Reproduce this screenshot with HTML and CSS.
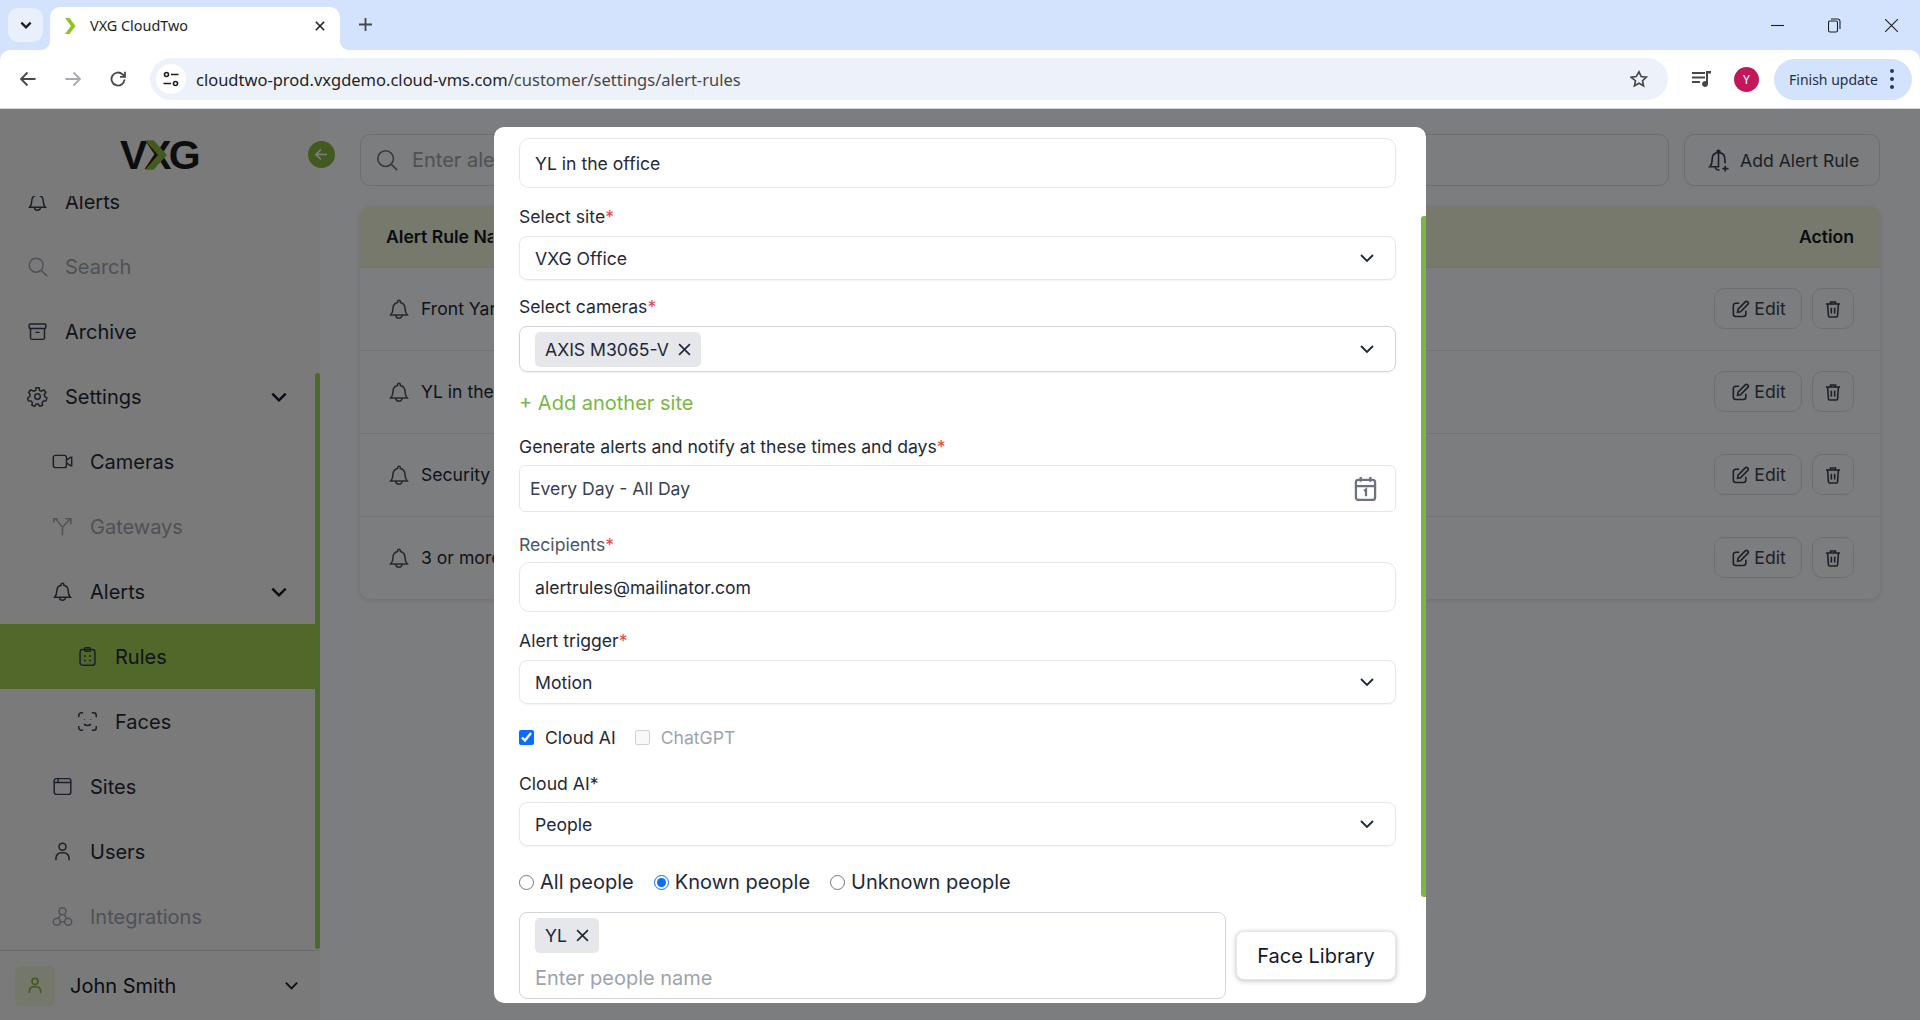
FILE: index.html
```html
<!DOCTYPE html>
<html lang="en">
<head>
    <meta charset="UTF-8">
    <meta name="viewport" content="width=device-width, initial-scale=1.0">
    <title>VXG CloudTwo</title>
    <link rel="stylesheet" href="styles.css">
</head>
<body>
    <!-- Shared icons -->
    <svg class="icon-defs" aria-hidden="true">
        <symbol id="i-bell" viewBox="0 0 24 24"><path d="M12 2.500a1.500 1.500 0 0 1 1.500 1.500v.8A6.500 6.500 0 0 1 18.500 11c0 4 1 5.800 2.500 7.500H3C4.500 16.800 5.500 15 5.500 11a6.500 6.500 0 0 1 5-6.200V4A1.500 1.500 0 0 1 12 2.500z"/><path d="M8.500 18.500a3.500 3.500 0 0 0 7 0"/></symbol>
        <symbol id="i-chev" viewBox="0 0 24 24"><path d="M4 8l8 8 8-8"/></symbol>
        <symbol id="i-edit" viewBox="0 0 24 24"><path d="M11 5H7a3 3 0 0 0-3 3v10a3 3 0 0 0 3 3h9a3 3 0 0 0 3-3v-4"/><path d="M9 16l.7-3.700 8.600-8.800a2.100 2.100 0 0 1 3 3l-8.700 8.800z"/></symbol>
        <symbol id="i-trash" viewBox="0 0 24 24"><path d="M3.500 6h17"/><path d="M9 6V3.500h6V6"/><path d="M5.500 6l1 14a1.500 1.500 0 0 0 1.500 1.500h8a1.500 1.500 0 0 0 1.500-1.500l1-14"/><path d="M10 10.500v7"/><path d="M14 10.500v7"/></symbol>
        <symbol id="i-user" viewBox="0 0 24 24"><circle cx="12" cy="6.500" r="4"/><path d="M4.500 22v-2.500a6 6 0 0 1 6-6h3a6 6 0 0 1 6 6V22"/></symbol>
    </svg>

    <!-- Browser chrome -->
    <div class="tabstrip">
        <button class="tab-list"><svg class="stroke-dark" width="14" height="14"><use href="#i-chev"/></svg></button>
        <div class="tab">
            <svg class="favicon" width="11" height="16" viewBox="0 0 11 16"><path d="M0 0h4.500l6 8-6 8H0l6-8z"/></svg>
            <span class="tab-title">VXG CloudTwo</span>
            <svg class="tab-close" width="10" height="10" viewBox="0 0 10 10"><path d="M.8.8l8.400 8.400M9.200.8L.8 9.200"/></svg>
        </div>
        <svg class="tab-new" width="13" height="13" viewBox="0 0 13 13"><path d="M6.500 0v13M0 6.500h13"/></svg>
        <div class="window-controls">
            <svg width="13" height="13" viewBox="0 0 13 13"><path d="M0 6.500h13"/></svg>
            <svg width="13" height="15" viewBox="0 0 13 15"><rect x=".5" y="3" width="9" height="11" rx="1.500"/><path d="M3 1h6.500A2.500 2.500 0 0 1 12 3.500V11"/></svg>
            <svg width="13" height="13" viewBox="0 0 13 13"><path d="M0 0l13 13M13 0L0 13"/></svg>
        </div>
    </div>
    <div class="toolbar">
        <svg class="tool" width="16" height="16" viewBox="0 0 16 16"><path d="M15.500 8H1M7.500 1.500L1 8l6.500 6.500"/></svg>
        <svg class="tool tool-off" width="16" height="16" viewBox="0 0 16 16"><path d="M.5 8H15M8.500 1.500L15 8l-6.500 6.500"/></svg>
        <svg class="tool" width="16" height="16" viewBox="0 0 16 16"><path d="M14.500 8.500A6.500 6.500 0 1 1 12.500 3.300L14.800 5.300"/><path d="M15 .8v5h-5"/></svg>
        <div class="omnibox">
            <span class="site-info">
                <svg width="16" height="16" viewBox="0 0 16 16"><circle cx="3.500" cy="3.500" r="2"/><path d="M8 3.500h7.500M.5 12.500H8"/><circle cx="12.500" cy="12.500" r="2"/></svg>
            </span>
            <span class="url">cloudtwo-prod.vxgdemo.cloud-vms.com<span class="url-path">/customer/settings/alert-rules</span></span>
            <svg class="star" width="18" height="18" viewBox="0 0 24 24"><path d="M12 2.500l2.900 6.300 6.900.8-5.100 4.700 1.400 6.800-6.100-3.400-6.100 3.400 1.400-6.800L1.300 9.600l6.900-.8z"/></svg>
        </div>
        <svg class="media" width="20" height="18" viewBox="0 0 20 18"><path d="M0 2h13v2H0zM0 6.500h13v2H0zM0 11h8v2H0z"/><path d="M14 1h5v2.500h-3V14a3 3 0 1 1-2-2.800z"/></svg>
        <span class="avatar">Y</span>
        <div class="finish-update">
            <span>Finish update</span>
            <span class="dots"><i></i><i></i><i></i></span>
        </div>
    </div>

    <!-- App page behind the dialog -->
    <div class="app">
        <aside class="sidebar">
            <div class="logo-row">
                <div class="logo"><span>V</span><span class="logo-x">X<svg width="22" height="30" viewBox="0 0 23 31"><path d="M0 0h9l14 15.500L9 31H0l13.500-15.500z"/></svg></span><span>G</span></div>
                <span class="collapse"><svg width="13" height="13" viewBox="0 0 13 13"><path d="M12 6.500H1.500M6 1.500l-5 5 5 5"/></svg></span>
            </div>
            <nav class="nav">
                <a class="nav-item nav-first"><svg class="nav-icon"><use href="#i-bell"/></svg>Alerts</a>
                <a class="nav-item off"><svg class="nav-icon" viewBox="0 0 24 24"><circle cx="10.500" cy="10.500" r="8"/><path d="M16.500 16.500L23 23"/></svg>Search</a>
                <a class="nav-item"><svg class="nav-icon" viewBox="0 0 24 24"><rect x="2.500" y="3.500" width="19" height="5" rx="1"/><path d="M4 8.500V19a2 2 0 0 0 2 2h12a2 2 0 0 0 2-2V8.500M9.500 13h5"/></svg>Archive</a>
                <a class="nav-item"><svg class="nav-icon" viewBox="0 0 24 24"><circle cx="12" cy="12" r="3.200"/><path d="M10.300 2h3.400l.6 3 2.200 1 2.700-1.500 2.300 2.700-1.700 2.500.4 2.400 2.500 1.500-.9 3.300-3 .2-1.500 1.900.5 3-3.200 1.200-1.700-2.500h-2.400l-1.700 2.500-3.200-1.200.5-3-1.500-1.900-3-.2-.9-3.300 2.500-1.500.4-2.400-1.700-2.500 2.300-2.700L7.700 6l2.200-1z"/></svg>Settings<svg class="chev"><use href="#i-chev"/></svg></a>
                <a class="nav-item sub"><svg class="nav-icon" viewBox="0 0 24 24"><rect x="1.500" y="5" width="15" height="14" rx="2.500"/><path d="M16.500 10.500l5-3.500h1v10h-1l-5-3.500"/></svg>Cameras</a>
                <a class="nav-item sub off"><svg class="nav-icon" viewBox="0 0 24 24"><path d="M12 22v-9l9-10M15 3h6.500v6.500M12 13L4 3M2 7.500V3h4.500"/></svg>Gateways</a>
                <a class="nav-item sub"><svg class="nav-icon"><use href="#i-bell"/></svg>Alerts<svg class="chev"><use href="#i-chev"/></svg></a>
                <a class="nav-item subsub active"><svg class="nav-icon" viewBox="0 0 24 24"><rect x="3.500" y="4" width="17" height="18" rx="3"/><rect x="8.500" y="2" width="7" height="4" rx="1.500"/><path d="M8 11.500h2M14 11.500h2M8 16.500h2M14 16.500h2"/></svg>Rules</a>
                <a class="nav-item subsub"><svg class="nav-icon" viewBox="0 0 24 24"><path d="M2 7V5a3 3 0 0 1 3-3h2M17 2h2a3 3 0 0 1 3 3v2M22 17v2a3 3 0 0 1-3 3h-2M7 22H5a3 3 0 0 1-3-3v-2M8 15c2 2 6 2 8 0M8.500 9.500v.5M15.500 9.500v.5"/></svg>Faces</a>
                <a class="nav-item sub"><svg class="nav-icon" viewBox="0 0 24 24"><rect x="2.500" y="3" width="19" height="18" rx="2.500"/><path d="M2.500 7.500h19M7 3v4.500"/></svg>Sites</a>
                <a class="nav-item sub"><svg class="nav-icon"><use href="#i-user"/></svg>Users</a>
                <a class="nav-item sub off"><svg class="nav-icon" viewBox="0 0 24 24"><circle cx="12" cy="6" r="4"/><circle cx="5.500" cy="18" r="4"/><circle cx="18.500" cy="18" r="4"/><path d="M10 9.500L7.500 14M14 9.500l2.500 4.500M9.500 18h5"/></svg>Integrations</a>
            </nav>
            <div class="side-scroll"></div>
            <div class="account">
                <span class="account-pic"><svg width="18" height="21"><use href="#i-user"/></svg></span>
                <span class="account-name">John Smith</span>
                <svg class="chev account-chev"><use href="#i-chev"/></svg>
            </div>
        </aside>

        <main class="content">
            <div class="top-row">
                <div class="search-box">
                    <svg width="22" height="22" viewBox="0 0 24 24"><circle cx="10.500" cy="10.500" r="8.500"/><path d="M16.800 16.800L23 23"/></svg>
                    <span class="cut cut-search">Enter ale</span>
                </div>
                <button class="add-rule">
                    <svg width="23" height="25" viewBox="0 0 24 24"><path d="M12 1.500a1.500 1.500 0 0 1 1.500 1.500v.8A6.500 6.500 0 0 1 18.500 10c0 2.500.3 4 .8 5M12 18.500H3C4.500 16.800 5.500 15 5.500 10a6.500 6.500 0 0 1 5-6.200V3A1.500 1.500 0 0 1 12 1.500zM8.500 18.500a3.500 3.500 0 0 0 4.500 3.300M19 17.500v6M16 20.500h6.500"/></svg>
                    Add Alert Rule
                </button>
            </div>
            <div class="rules-card">
                <div class="rules-head"><span class="cut cut-head">Alert Rule Na</span><span>Action</span></div>
                <div class="rule-row">
                    <svg class="rule-bell"><use href="#i-bell"/></svg><span class="rule-name"><span class="cut cut-row">Front Yar</span></span>
                    <button class="btn-edit"><svg><use href="#i-edit"/></svg>Edit</button>
                    <button class="btn-del"><svg><use href="#i-trash"/></svg></button>
                </div>
                <div class="rule-row">
                    <svg class="rule-bell"><use href="#i-bell"/></svg><span class="rule-name"><span class="cut cut-row">YL in the</span></span>
                    <button class="btn-edit"><svg><use href="#i-edit"/></svg>Edit</button>
                    <button class="btn-del"><svg><use href="#i-trash"/></svg></button>
                </div>
                <div class="rule-row">
                    <svg class="rule-bell"><use href="#i-bell"/></svg><span class="rule-name"><span class="cut cut-row">Security</span></span>
                    <button class="btn-edit"><svg><use href="#i-edit"/></svg>Edit</button>
                    <button class="btn-del"><svg><use href="#i-trash"/></svg></button>
                </div>
                <div class="rule-row">
                    <svg class="rule-bell"><use href="#i-bell"/></svg><span class="rule-name"><span class="cut cut-row">3 or more</span></span>
                    <button class="btn-edit"><svg><use href="#i-edit"/></svg>Edit</button>
                    <button class="btn-del"><svg><use href="#i-trash"/></svg></button>
                </div>
            </div>
        </main>

        <!-- Dialog -->
        <div class="overlay">
            <div class="modal">
                <div class="input input-first">YL in the office</div>

                <label class="label lb-site">Select site<b>*</b></label>
                <div class="input select">VXG Office<svg class="chev-sm"><use href="#i-chev"/></svg></div>

                <label class="label lb-cameras">Select cameras<b>*</b></label>
                <div class="input select multi">
                    <span class="chip">AXIS M3065-V<svg viewBox="0 0 12 12"><path d="M1 1l10 10M11 1L1 11"/></svg></span>
                    <svg class="chev-sm"><use href="#i-chev"/></svg>
                </div>

                <div class="add-site">+ Add another site</div>

                <label class="label lb-times">Generate alerts and notify at these times and days<b>*</b></label>
                <div class="input schedule">Every Day - All Day
                    <svg class="calendar" viewBox="0 0 24 26"><rect x="2" y="4" width="20" height="21" rx="2.500"/><path d="M2 10.500h20M7 1v5M17 1v5M10.500 15.500l2-1.500v7"/></svg>
                </div>

                <label class="label lb-recipients">Recipients<b>*</b></label>
                <div class="input input-mail">alertrules@mailinator.com</div>

                <label class="label lb-trigger">Alert trigger<b>*</b></label>
                <div class="input select">Motion<svg class="chev-sm"><use href="#i-chev"/></svg></div>

                <div class="checks">
                    <label class="check"><input type="checkbox" checked>Cloud AI</label>
                    <label class="check check-off"><input type="checkbox" disabled>ChatGPT</label>
                </div>

                <label class="label lb-cloud">Cloud AI<span class="plain-star">*</span></label>
                <div class="input select">People<svg class="chev-sm"><use href="#i-chev"/></svg></div>

                <div class="radios">
                    <label class="radio"><input type="radio" name="people">All people</label>
                    <label class="radio"><input type="radio" name="people" checked>Known people</label>
                    <label class="radio"><input type="radio" name="people">Unknown people</label>
                </div>

                <div class="people-row">
                    <div class="people-box">
                        <span class="chip">YL<svg viewBox="0 0 12 12"><path d="M1 1l10 10M11 1L1 11"/></svg></span>
                        <div class="placeholder">Enter people name</div>
                    </div>
                    <button class="face-library">Face Library</button>
                </div>

                <div class="modal-scroll"></div>
            </div>
        </div>
    </div>
</body>
</html>
```

FILE: styles.css
```css
* {
    box-sizing: border-box;
}

html, body {
    height: 100%;
}

body {
    margin: 0;
    display: flex;
    flex-direction: column;
    overflow: hidden;
    font-family: Inter, "Liberation Sans", sans-serif;
    color: #111827;
    background-color: #d3e3fd;
}

button {
    font-family: inherit;
}

.icon-defs {
    display: none;
}

/* Browser chrome */
.tabstrip {
    height: 50px;
    flex-shrink: 0;
    display: flex;
    align-items: flex-end;
    font-family: "Noto Sans", sans-serif;
}

.tab-list {
    width: 35px;
    height: 34px;
    margin: 0 7px 8px 8px;
    border: none;
    border-radius: 10px;
    background-color: #e9effb;
    display: flex;
    align-items: center;
    justify-content: center;
}

.stroke-dark {
    fill: none;
    stroke: #1f1f1f;
    stroke-width: 4;
}

.tab {
    position: relative;
    width: 290px;
    height: 43px;
    display: flex;
    align-items: center;
    padding: 0 15px 6px 15px;
    background-color: #fff;
    border-radius: 10px 10px 0 0;
}

/* Curved feet of the active tab */
.tab::before, .tab::after {
    content: "";
    position: absolute;
    bottom: 0;
    width: 10px;
    height: 10px;
}

.tab::before {
    left: -10px;
    background: radial-gradient(circle at 0 0, transparent 10px, #fff 10.500px);
}

.tab::after {
    right: -10px;
    background: radial-gradient(circle at 100% 0, transparent 10px, #fff 10.500px);
}

.favicon {
    fill: #8fc31f;
    flex-shrink: 0;
}

.tab-title {
    margin-left: 14px;
    font-size: 14.400px;
    color: #1f1f1f;
    flex: 1;
}

.tab-close {
    stroke: #1f1f1f;
    stroke-width: 1.600;
}

.tab-new {
    margin: 0 0 19px 19px;
    stroke: #474747;
    stroke-width: 1.800;
}

.window-controls {
    margin-left: auto;
    height: 50px;
    width: 149px;
    padding-right: 22px;
    display: flex;
    justify-content: space-between;
    align-items: center;
}

.window-controls svg {
    fill: none;
    stroke: #1f1f1f;
    stroke-width: 1.100;
}

.toolbar {
    height: 59px;
    flex-shrink: 0;
    display: flex;
    align-items: center;
    padding-left: 20px;
    background-color: #fff;
    border-radius: 10px 10px 0 0;
    border-bottom: 1px solid #d3d5d8;
}

.tool {
    fill: none;
    stroke: #474747;
    stroke-width: 1.800;
    margin-right: 29px;
    flex-shrink: 0;
}

.tool-off {
    stroke: #a8abb0;
}

.omnibox {
    width: 1518px;
    height: 42px;
    margin-left: -5px;
    display: flex;
    align-items: center;
    padding: 0 20px 0 6px;
    border-radius: 21px;
    background-color: #edf2fa;
}

.site-info {
    width: 30px;
    height: 30px;
    border-radius: 50%;
    background-color: #fff;
    display: flex;
    align-items: center;
    justify-content: center;
}

.site-info svg {
    fill: none;
    stroke: #1f1f1f;
    stroke-width: 1.600;
}

.url {
    margin-left: 10px;
    font-family: "Noto Sans", sans-serif;
    font-size: 16.500px;
    color: #1f1f1f;
    flex: 1;
}

.url-path {
    color: #474747;
}

.star {
    fill: none;
    stroke: #474747;
    stroke-width: 2.200;
}

.media {
    margin-left: 24px;
    fill: #474747;
    flex-shrink: 0;
}

.avatar {
    width: 25px;
    height: 25px;
    margin-left: 22px;
    border-radius: 50%;
    background-color: #c2185b;
    color: #fff;
    font-family: "Noto Sans", sans-serif;
    font-size: 12px;
    display: flex;
    align-items: center;
    justify-content: center;
    flex-shrink: 0;
}

.finish-update {
    width: 138px;
    height: 41px;
    margin-left: 15px;
    padding-left: 15px;
    border-radius: 21px;
    background-color: #d3e3fd;
    display: flex;
    align-items: center;
    font-family: "Noto Sans", sans-serif;
    font-size: 14px;
    color: #1f2f4a;
    flex-shrink: 0;
}

.dots {
    margin-left: 12px;
    display: flex;
    flex-direction: column;
    gap: 4px;
}

.dots i {
    width: 4px;
    height: 4px;
    border-radius: 50%;
    background-color: #1f3a68;
}

/* App */
.app {
    position: relative;
    flex: 1;
    display: flex;
    min-height: 0;
    background-color: #f9fafd;
}

.sidebar {
    position: relative;
    width: 320px;
    flex-shrink: 0;
    display: flex;
    flex-direction: column;
    background-color: #f4f4f4;
}

.logo-row {
    position: relative;
    height: 87px;
    flex-shrink: 0;
    padding: 29px 0 0 120px;
}

.logo {
    display: flex;
    font-family: "Liberation Sans", sans-serif;
    font-weight: 700;
    font-size: 41px;
    line-height: 34px;
    color: #1a1a1a;
}

.logo-x {
    position: relative;
    margin-left: -3px;
    margin-right: -3px;
}

.logo-x svg {
    position: absolute;
    left: 1px;
    top: 2px;
    fill: #84b440;
}

.collapse {
    position: absolute;
    left: 308px;
    top: 32px;
    width: 27px;
    height: 27px;
    border-radius: 50%;
    background-color: #84b440;
    display: flex;
    align-items: center;
    justify-content: center;
}

.collapse svg {
    fill: none;
    stroke: #fff;
    stroke-width: 1.600;
}

.nav {
    flex: 1;
    overflow: hidden;
    min-height: 0;
    margin-right: 5px;
}

.nav-item {
    height: 65px;
    display: flex;
    align-items: center;
    padding-left: 27px;
    font-size: 20px;
    color: #1f2937;
}

.nav-first {
    margin-top: -27px;
}

.nav-icon {
    width: 21px;
    height: 21px;
    margin-right: 17px;
    fill: none;
    stroke: #374151;
    stroke-width: 1.700;
    flex-shrink: 0;
}

.sub {
    padding-left: 52px;
}

.subsub {
    padding-left: 77px;
}

.off {
    color: #9ca3af;
}

.off .nav-icon {
    stroke: #9ca3af;
}

.active {
    background-color: #a4d054;
}

.chev {
    width: 20px;
    height: 20px;
    margin-left: auto;
    margin-right: 26px;
    fill: none;
    stroke: #111827;
    stroke-width: 3;
}

.side-scroll {
    position: absolute;
    right: 0;
    top: 264px;
    width: 5px;
    height: 576px;
    border-radius: 3px;
    background-color: #96d556;
}

.account {
    height: 70px;
    flex-shrink: 0;
    display: flex;
    align-items: center;
    padding-left: 15px;
    border-top: 1px solid #d8d8d8;
}

.account-pic {
    width: 40px;
    height: 40px;
    border-radius: 6px;
    background-color: #e6f0d6;
    display: flex;
    align-items: center;
    justify-content: center;
}

.account-pic svg {
    fill: none;
    stroke: #84b440;
    stroke-width: 2.200;
}

.account-name {
    margin-left: 15px;
    font-size: 20px;
}

.account-chev {
    width: 17px;
    height: 17px;
    margin-right: 20px;
    stroke-width: 2.600;
}

.content {
    flex: 1;
    padding: 25px 40px 0 40px;
}

.top-row {
    display: flex;
    gap: 15px;
}

/* Text that the dialog covers is clipped at the dialog's edge */
.cut {
    display: block;
    overflow: hidden;
    white-space: nowrap;
}

.cut-search {
    width: 83px;
}

.cut-head {
    width: 107px;
}

.cut-row {
    width: 74px;
}

.search-box {
    flex: 1;
    height: 52px;
    padding-left: 15px;
    border: 1px solid #dcdee2;
    border-radius: 10px;
    display: flex;
    align-items: center;
    gap: 14px;
    font-size: 20px;
    color: #9ca3af;
}

.search-box svg {
    fill: none;
    stroke: #6b7280;
    stroke-width: 1.700;
}

.add-rule {
    width: 196px;
    height: 52px;
    padding: 0 0 0 22px;
    border: 1px solid #dcdee2;
    border-radius: 10px;
    background: none;
    display: flex;
    align-items: center;
    gap: 10px;
    font-size: 17.600px;
    color: #374151;
}

.add-rule svg {
    fill: none;
    stroke: #374151;
    stroke-width: 1.700;
}

.rules-card {
    margin-top: 21px;
    border-radius: 10px;
    box-shadow: 0 1px 5px rgba(0, 0, 0, 0.12);
    overflow: hidden;
}

.rules-head {
    height: 60px;
    padding: 0 26px 1px 26px;
    display: flex;
    align-items: center;
    justify-content: space-between;
    background-color: #ecf3d6;
    font-size: 17.600px;
    font-weight: 600;
}

.rule-row {
    height: 83px;
    padding: 0 26px 1px 28px;
    display: flex;
    align-items: center;
    border-top: 1px solid #e5e7eb;
    font-size: 17.600px;
    color: #1f2937;
}

.rule-row:first-of-type {
    border-top: none;
}

.rule-bell {
    width: 22px;
    height: 24px;
    margin-right: 11px;
    fill: none;
    stroke: #4b5563;
    stroke-width: 1.700;
}

.rule-name {
    flex: 1;
}

.btn-edit, .btn-del {
    height: 41px;
    border: 1px solid #dcdee2;
    border-radius: 10px;
    background: none;
    display: flex;
    align-items: center;
    justify-content: center;
    font-size: 17.600px;
    color: #374151;
}

.btn-edit {
    width: 88px;
    gap: 4px;
}

.btn-del {
    width: 42px;
    margin-left: 10px;
}

.btn-edit svg, .btn-del svg {
    width: 20px;
    height: 20px;
    fill: none;
    stroke: #374151;
    stroke-width: 1.900;
}

/* Dialog */
.overlay {
    position: absolute;
    inset: 0;
    background-color: rgba(0, 0, 0, 0.5);
    padding: 18px 0 0 494px;
}

.modal {
    position: relative;
    width: 932px;
    height: 876px;
    padding: 11px 30px 0 25px;
    overflow: hidden;
    border-radius: 10px;
    background-color: #fff;
    font-size: 18px;
}

.modal-scroll {
    position: absolute;
    right: 0;
    top: 89px;
    width: 5px;
    height: 681px;
    border-radius: 3px 0 0 3px;
    background-color: #7ab648;
}

.label {
    display: block;
    height: 24px;
    line-height: 24px;
    font-size: 17.600px;
    color: #1f2937;
}

.label b {
    font-weight: 400;
    color: #ef4444;
}

.plain-star {
    color: #1f2937;
}

.lb-site { margin: 17px 0 7px; }
.lb-cameras { margin: 15px 0 7px; }
.lb-times { margin: 18px 0 6px; }
.lb-recipients { margin: 21px 0 5px; color: #4b5563; }
.lb-trigger { margin: 17px 0 7px; }
.lb-cloud { margin: 23px 0 6px; }

.input {
    position: relative;
    height: 50px;
    padding-left: 15px;
    display: flex;
    align-items: center;
    border: 1px solid #e5e7eb;
    border-radius: 10px;
    font-size: 17.600px;
    color: #1f2937;
}

.select {
    height: 44px;
    box-shadow: 0 1px 2px rgba(0, 0, 0, 0.05);
    border-radius: 8px;
}

.multi {
    height: 46px;
    border-color: #d1d5db;
}

.schedule {
    height: 47px;
    padding-left: 10px;
    border-radius: 6px;
    color: #374151;
}

.chev-sm {
    position: absolute;
    right: 19px;
    top: 50%;
    width: 18px;
    height: 18px;
    margin-top: -9px;
    fill: none;
    stroke: #1f2937;
    stroke-width: 2.500;
}

.calendar {
    position: absolute;
    right: 18px;
    top: 10px;
    width: 23px;
    height: 25px;
    fill: none;
    stroke: #6b7280;
    stroke-width: 2.400;
}

.chip {
    height: 35px;
    padding: 0 10px;
    display: inline-flex;
    align-items: center;
    gap: 9px;
    border-radius: 5px;
    background-color: #e5e7eb;
    font-size: 17.600px;
    color: #1f2937;
}

.chip svg {
    width: 13px;
    height: 13px;
    fill: none;
    stroke: #1f2937;
    stroke-width: 1.500;
}

.add-site {
    height: 28px;
    line-height: 28px;
    margin-top: 17px;
    font-size: 20px;
    color: #7ab648;
}

.checks {
    height: 24px;
    margin-top: 21px;
    display: flex;
    gap: 19px;
}

.check, .radio {
    display: flex;
    align-items: center;
}

.check {
    font-size: 17.600px;
    color: #1f2937;
}

.check input {
    width: 15px;
    height: 15px;
    margin: 0 11px 0 0;
    accent-color: #0a6cff;
}

.check-off {
    color: #9ca3af;
}

.radios {
    height: 24px;
    margin-top: 24px;
    display: flex;
    gap: 20px;
}

.radio {
    font-size: 20px;
    color: #1f2937;
}

.radio input {
    width: 15px;
    height: 15px;
    margin: 0 6px 0 0;
    accent-color: #0a6cff;
}

.people-row {
    margin-top: 18px;
    display: flex;
    gap: 10px;
}

.people-box {
    width: 707px;
    height: 87px;
    padding: 5px 15px 0;
    border: 1px solid #d1d5db;
    border-radius: 8px;
}

.placeholder {
    margin-top: 13px;
    font-size: 20px;
    color: #9ca3af;
}

.face-library {
    width: 160px;
    height: 49px;
    margin-top: 19px;
    border: 1px solid #e5e7eb;
    border-radius: 8px;
    background-color: #fff;
    box-shadow: 0 1px 5px rgba(0, 0, 0, 0.25);
    font-size: 20px;
    color: #111827;
}
```
